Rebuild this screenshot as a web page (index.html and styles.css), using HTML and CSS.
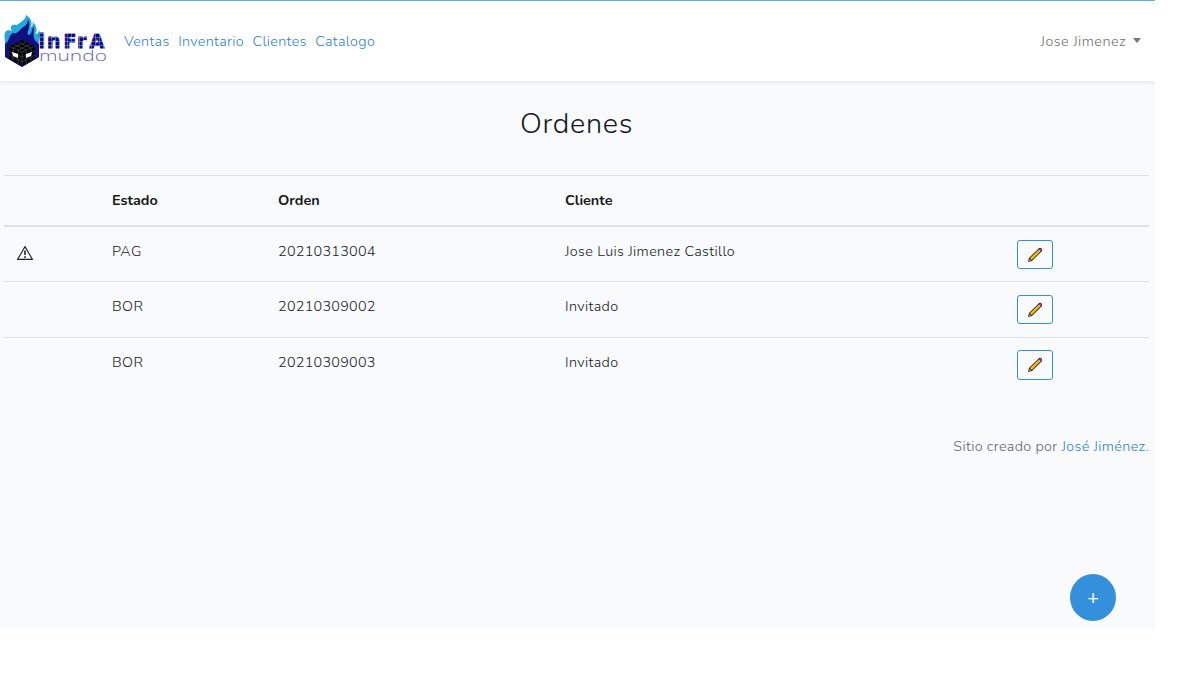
FILE: index.html
```html
<!DOCTYPE html>
<html lang="es">
<head>
<meta charset="utf-8">
<title>Ordenes</title>
<link rel="stylesheet" href="styles.css">
</head>
<body>
<div class="app">
  <header class="navbar">
    <a class="brand" href="#" aria-label="Infra mundo">
      <svg width="106" height="54" viewBox="0 0 106 54">
        <defs>
          <pattern id="pixels" width="4" height="4" patternUnits="userSpaceOnUse">
            <rect width="4" height="4" fill="#7d7dc2"/><rect width="3.3" height="3.3" fill="#0a0a82"/>
          </pattern>
        </defs>
        <path d="M1 27C-1 17 3 15 8 17C5 12 8 10 13 11C17 8 22 5 22 1C29 5 28 11 26 14C30 11 29 9 28 7C34 13 33 18 31 20C34 20 35 18 35 16C38 22 34 26 35 30V43L18 53L1 43Z" fill="#21a8dc"/>
        <path d="M1 30C6 27 4 22 9 19C14 21 15 15 21 12C23 10 24 8 24 5C28 12 22 18 24 21C29 21 27 14 30 13C30 19 28 25 33 28L35 31V43L18 53L1 43Z" fill="#101080"/>
        <path d="M18 26L31 32V45L18 52L5 45V32Z" fill="#050508"/>
        <path d="M5 32L18 38L31 32M18 38V52M9 30L22 36V50M14 28L27 34V48M27 30L14 36V50M22 28L9 34V48M5 37L18 43L31 37M5 41L18 48L31 41" fill="none" stroke="#44444b" stroke-width=".7"/>
        <path d="M8 38L14 40V44L9 42ZM22 40L28 38L27 42L22 44Z" fill="#fff"/>
        <text class="logo-top" x="34.5 43 59.5 73 85.5" y="34">inFrA</text>
        <text class="logo-bottom" x="35" y="46.5" textLength="68" lengthAdjust="spacingAndGlyphs">mundo</text>
      </svg>
    </a>
    <nav class="links">
      <a href="#">Ventas</a><a href="#">Inventario</a><a href="#">Clientes</a><a href="#">Catalogo</a>
    </nav>
    <a class="user" href="#"><span>Jose Jimenez</span><i class="caret"></i></a>
  </header>
  <main>
    <h1>Ordenes</h1>
    <table>
      <colgroup><col class="c-alert"><col class="c-state"><col class="c-order"><col class="c-client"><col></colgroup>
      <thead><tr><th></th><th>Estado</th><th>Orden</th><th>Cliente</th><th></th></tr></thead>
      <tbody>
        <tr>
          <td><svg class="warning" width="16" height="16" viewBox="0 0 16 16"><path d="M8 1.6L15.4 14.4H.6Z" fill="none" stroke="#212529" stroke-width="1.1" stroke-linejoin="round"/><path d="M8 5.5V10M8 11.3V13" stroke="#212529" stroke-width="1.6"/></svg></td>
          <td class="state">PAG</td><td class="number">20210313004</td><td class="client">Jose Luis Jimenez Castillo</td>
          <td><button class="edit" aria-label="Editar"><svg width="16" height="16" viewBox="0 0 16 16"><use href="#pencil"/></svg></button></td>
        </tr>
        <tr>
          <td></td><td class="state">BOR</td><td class="number">20210309002</td><td class="client">Invitado</td>
          <td><button class="edit" aria-label="Editar"><svg width="16" height="16" viewBox="0 0 16 16"><use href="#pencil"/></svg></button></td>
        </tr>
        <tr>
          <td></td><td class="state">BOR</td><td class="number">20210309003</td><td class="client">Invitado</td>
          <td><button class="edit last" aria-label="Editar"><svg width="16" height="16" viewBox="0 0 16 16"><use href="#pencil"/></svg></button></td>
        </tr>
      </tbody>
    </table>
    <footer>Sitio creado por <a href="#">José Jiménez.</a></footer>
  </main>
  <button class="add" aria-label="Agregar"><span>+</span></button>
</div>
<svg class="symbols" width="0" height="0"><symbol id="pencil" viewBox="0 0 16 16">
  <path d="M1 15L2 11L11.6 1.4Q13 .3 14.6 1.5Q15.7 3 14.6 4.4L5 14Z" fill="#252525"/>
  <path d="M2.9 11.3L10.7 3.5L12.6 5.3L4.8 13.1Z" fill="#ffb50b"/>
  <path d="M10.7 3.5L12 2.4L13.7 4.1L12.6 5.3Z" fill="#c6cbd1"/>
  <path d="M11.9 2.3Q13.2 1.3 14.3 2.2Q15 3.2 13.9 4.3Z" fill="#e43c55"/>
  <path d="M2.7 12.2L4 13.4L2.2 14Z" fill="#e9d2ba"/>
</symbol></svg>
</body>
</html>
```
FILE: styles.css
```css
* { box-sizing: border-box; }
body { margin: 0; background: #fff; color: #15181b; font: 300 14.4px/23px Nunito, Lato, sans-serif; }
a { color: #2f7fd8; text-decoration: none; }
.app { position: relative; width: 1155px; height: 629px; background: #f8fafc; border-top: 1px solid #60a9e4; }
.navbar { display: flex; align-items: center; height: 80px; padding: 0 14px 0 4px; background: #fff; box-shadow: 0 2px 4px rgba(0, 0, 0, .075); clip-path: inset(0 0 -6px 0); }
.brand { display: flex; width: 120px; }
.logo-top { font: bold 19px "DejaVu Sans", sans-serif; fill: url(#pixels); stroke: url(#pixels); stroke-width: .8; }
.logo-bottom { font: 300 15px "Open Sans", sans-serif; fill: #6666b4; }
.links { display: flex; gap: 8.6px; letter-spacing: .3px; }
.user { display: flex; align-items: center; gap: 7px; margin-left: auto; color: #707070; letter-spacing: .45px; }
.caret { margin-top: -2px; border-top: 5px solid #777; border-left: 4.5px solid transparent; border-right: 4.5px solid transparent; }
main { padding: 0 6px 0 4px; }
h1 { margin: 0; padding-top: 24px; height: 94px; font-size: 28.8px; line-height: 37px; font-weight: 350; text-align: center; letter-spacing: .7px; }
table { width: 1145px; table-layout: fixed; border-collapse: separate; border-spacing: 0; }
.c-alert { width: 96px; }
.c-state { width: 166px; }
.c-order { width: 287px; }
.c-client { width: 452px; }
th, td { padding: 13px 12px 0; border-top: 1px solid #dee2e6; text-align: left; vertical-align: top; }
th { height: 51px; border-bottom: 1px solid #dee2e6; font-weight: 700; }
td { height: 55.5px; }
tbody tr:first-child td { height: 55px; }
.warning { display: block; margin: 5px 0 0 1px; }
.state { letter-spacing: .4px; }
.number { letter-spacing: .25px; }
.client { letter-spacing: .36px; }
.edit { display: flex; align-items: center; justify-content: center; width: 36px; height: 29px; padding: 0; background: transparent; border: 1px solid #3490dc; border-radius: 3px; }
.edit.last { height: 30px; margin-top: -1px; }
footer { margin-top: 43px; text-align: right; color: #5c656d; letter-spacing: .33px; }
.add { position: absolute; left: 1070px; top: 573px; width: 46px; height: 47px; padding: 0; border: 0; border-radius: 50%; background: #3490dc; color: #fff; font: 400 20px/47px Lato, sans-serif; }
.symbols { position: absolute; }
```
